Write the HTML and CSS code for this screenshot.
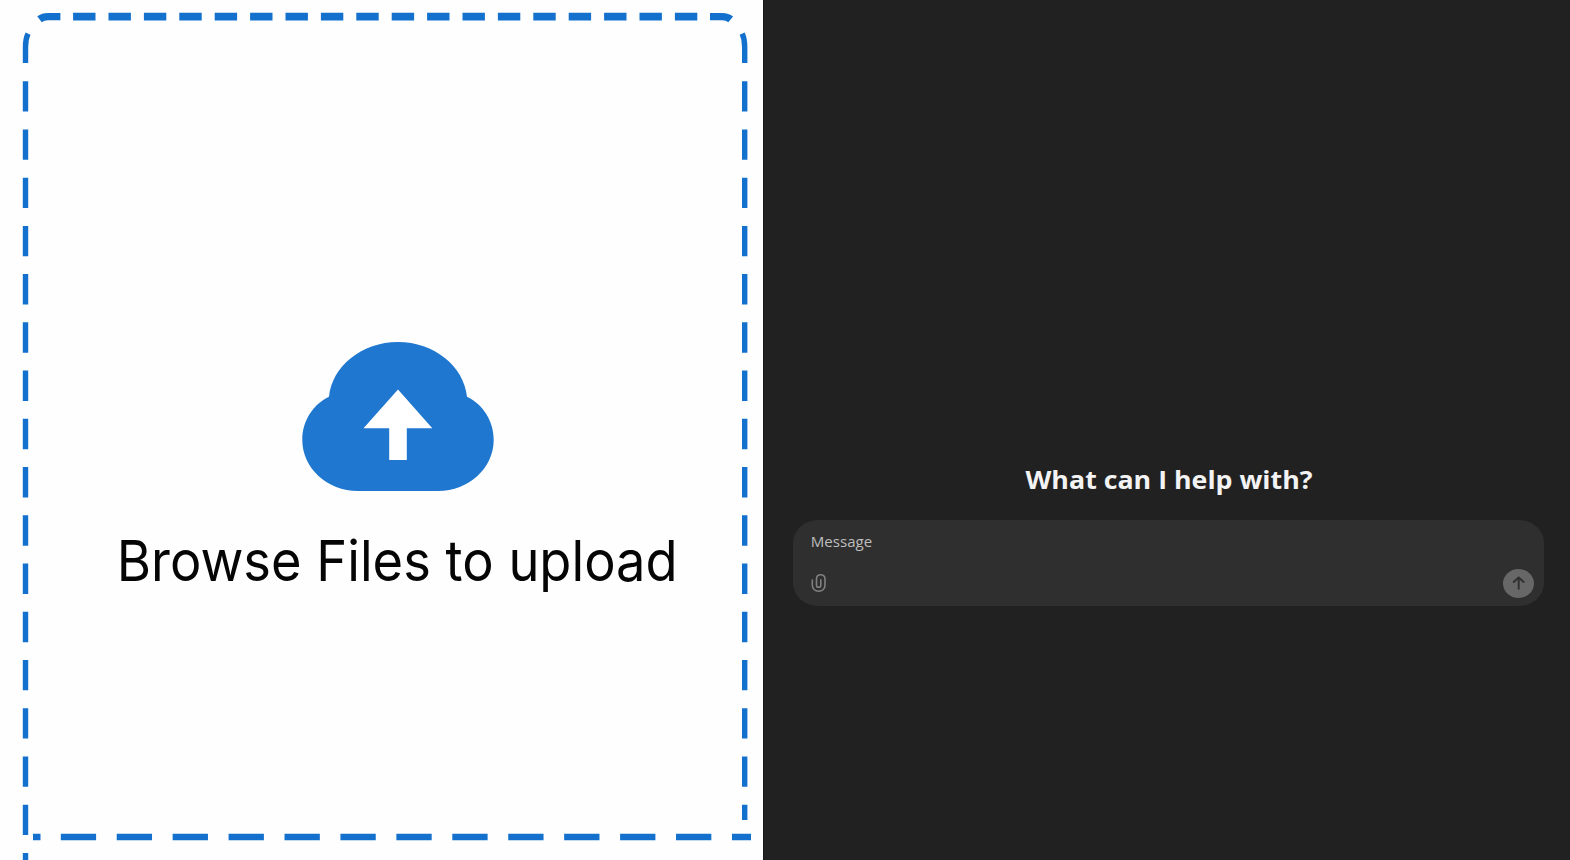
FILE: index.html
```
<!DOCTYPE html>
<html lang="en">
<head>
<meta charset="utf-8">
<title>Upload and chat</title>
<link rel="stylesheet" href="styles.css">
</head>
<body>
<main class="app">
  <section class="upload">
    <svg class="outline" viewBox="0 0 763 860" aria-hidden="true">
      <g class="dash">
        <path class="top" d="M73.1 16.6H698"/>
        <path class="top-end" d="M39.5 19.3Q43 16.6 48 16.6H60.4M710 16.6H722Q727.5 16.6 730.7 19.3"/>
        <path class="side" d="M25.5 81.2V860M744.7 81.2V820"/>
        <path class="side-end" d="M28 33.6Q25.5 39 25.5 47V63M742.2 33.6Q744.7 39 744.7 47V63"/>
        <path class="bottom" d="M33 837H40.5M60.8 837H751"/>
      </g>
    </svg>
    <svg class="cloud" viewBox="0 0 192 150" aria-hidden="true">
      <path class="cloud-body" d="M96 .9C60 .9 30 25 27 55.8C11 63.5 .3 80 .3 99C.3 127 25 150 56 150H136C167 150 191.7 127 191.7 99C191.7 80 181 63.5 165 55.8C162 25 132 .9 96 .9Z"/>
      <path class="cloud-arrow" d="M96 48.5L130.3 87.2H104.8V119H87.2V87.2H61.5Z"/>
    </svg>
    <svg class="browse" viewBox="0 0 562 64">
      <text x="-1.2" y="50" textLength="560.8" lengthAdjust="spacingAndGlyphs">Browse Files to upload</text>
    </svg>
  </section>
  <section class="chat">
    <svg class="heading" viewBox="0 0 288 40">
      <text x=".5" y="29.3" textLength="287" lengthAdjust="spacingAndGlyphs">What can I help with?</text>
    </svg>
    <div class="composer">
      <svg class="message" viewBox="0 0 64 22">
        <text x="-.2" y="15.2" textLength="61.4" lengthAdjust="spacingAndGlyphs">Message</text>
      </svg>
      <div class="tools">
        <svg class="clip" viewBox="0 0 16 20" aria-hidden="true">
          <path d="M1.3 6V10.8C1.3 14.8 4 17.2 7.7 17.2S14 14.8 14 10.8V5C14 2.2 12.3 .8 9.8 .8S5.5 2.2 5.5 5V10.9C5.5 12.4 6.2 13.3 7.6 13.3S9.8 12.4 9.8 10.9V5.8"/>
        </svg>
        <button class="send" aria-label="Send">
          <svg viewBox="0 0 32 29" aria-hidden="true"><path d="M16.2 20V8.3M11 12.9L16.2 8.3L21.4 12.9"/></svg>
        </button>
      </div>
    </div>
  </section>
</main>
</body>
</html>
```
FILE: styles.css
```
* { box-sizing: border-box; }
body { margin: 0; background: #fff; }
.app { display: flex; width: 1570px; height: 860px; overflow: hidden; }
svg { display: block; overflow: visible; flex: none; }

.upload {
  position: relative;
  width: 763px;
  flex: none;
  padding: 341px 0 0 118px;
  background: #fefefe;
}
.outline { position: absolute; inset: 0; width: 763px; height: 860px; }
.dash path { fill: none; stroke: #1370cc; }
.dash .top { stroke-width: 7.6; stroke-dasharray: 22.4 13; }
.dash .top-end { stroke-width: 7.4; }
.dash .side { stroke-width: 5.4; stroke-dasharray: 30.4 17.83; }
.dash .side-end { stroke-width: 5.4; }
.dash .bottom { stroke-width: 6.4; stroke-dasharray: 35.3 20.63; }
.cloud { width: 192px; height: 150px; margin-left: 184px; }
.cloud-body { fill: #1f77cf; }
.cloud-arrow { fill: #fff; }
.browse { width: 562px; height: 64px; margin-top: 40px; }
.browse text { font: 400 56.5px Inter, "Liberation Sans", sans-serif; fill: #050505; }

.chat {
  flex: 1;
  display: flex;
  flex-direction: column;
  padding: 460px 26px 0 29px;
  background: #212121;
  border-left: 1px solid #181818;
}
.heading { width: 288px; height: 40px; margin-left: 232px; }
.heading text { font: 700 25.5px "Open Sans", "Noto Sans", sans-serif; fill: #f3f3f3; }
.composer {
  height: 86px;
  margin-top: 20px;
  padding: 12px 9px 8px 18px;
  border-radius: 25px / 23px;
  background: #2f2f2f;
}
.message { width: 64px; height: 22px; }
.message text { font: 400 14.5px "Open Sans", "Noto Sans", sans-serif; fill: #bebebe; }
.tools { display: flex; align-items: center; justify-content: space-between; padding: 15px 1px 0 0; }
.clip { width: 16px; height: 20px; }
.clip path { fill: none; stroke: #808080; stroke-width: 1.6; stroke-linecap: round; }
.send { width: 31px; height: 29px; padding: 0; border: 0; border-radius: 50%; background: #676767; }
.send svg { width: 31px; height: 29px; }
.send path { fill: none; stroke: #2f2f2f; stroke-width: 2; stroke-linecap: round; stroke-linejoin: round; }
```
